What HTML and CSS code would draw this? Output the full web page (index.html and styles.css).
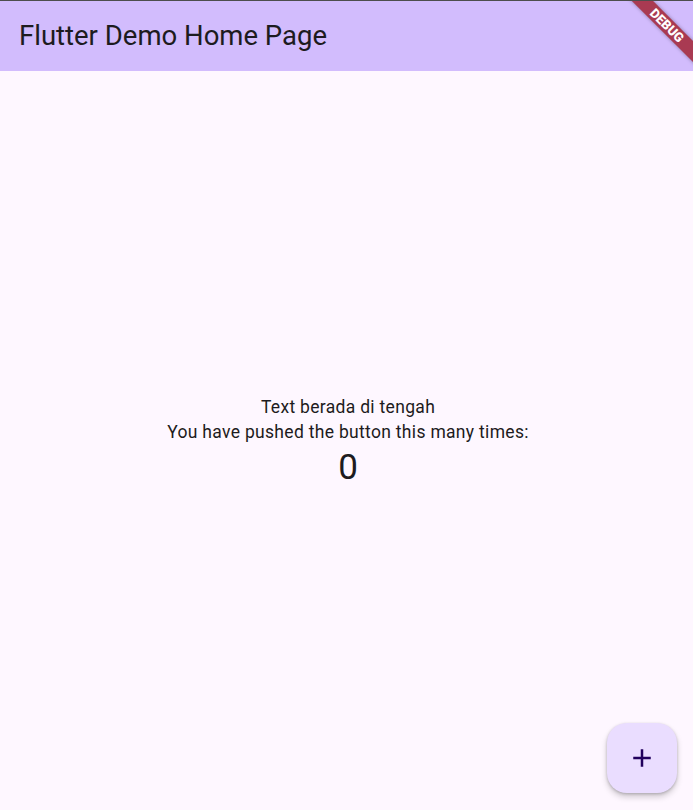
FILE: index.html
```html
<!DOCTYPE html>
<html lang="en">
<head>
<meta charset="utf-8">
<title>Flutter Demo Home Page</title>
<link rel="stylesheet" href="styles.css">
</head>
<body>
<div class="app">
  <header class="appbar">
    <h1 class="title">Flutter Demo Home Page</h1>
  </header>
  <main class="content">
    <p class="line">Text berada di tengah</p>
    <p class="line">You have pushed the button this many times:</p>
    <p class="counter">0</p>
  </main>
  <button class="fab" aria-label="Increment">
    <svg viewBox="0 0 24 24" width="30" height="30"><path d="M19 13h-6v6h-2v-6H5v-2h6V5h2v6h6v2z" fill="#21005D"/></svg>
  </button>
  <div class="banner">DEBUG</div>
</div>
</body>
</html>
```
FILE: styles.css
```css
html, body {
  margin: 0;
  padding: 0;
}
body {
  width: 693px;
  height: 810px;
  overflow: hidden;
  background: #FEF7FF;
  font-family: Roboto, "Liberation Sans", sans-serif;
  color: #1D1B20;
}
.app {
  position: relative;
  width: 693px;
  height: 810px;
  overflow: hidden;
  display: flex;
  flex-direction: column;
  border-top: 1px solid #4d4d4d;
  box-sizing: border-box;
}
.appbar {
  height: 70px;
  flex: none;
  background: #D2BCFD;
  display: flex;
  align-items: center;
  padding-left: 19px;
}
.title {
  margin: 0;
  font-size: 27.5px;
  font-weight: 400;
  line-height: 34px;
  color: #1D1B20;
}
.content {
  flex: 1;
  display: flex;
  flex-direction: column;
  align-items: center;
  justify-content: center;
  padding: 4px 0 0 3px;
}
.line {
  margin: 0;
  font-size: 17.5px;
  line-height: 25px;
  letter-spacing: 0.31px;
}
.counter {
  margin: 0;
  font-size: 35px;
  line-height: 45px;
}
.fab {
  position: absolute;
  left: 607px;
  top: 722px;
  width: 70px;
  height: 70px;
  border: none;
  padding: 0;
  border-radius: 20px;
  background: #EADDFF;
  box-shadow: 0 4px 6px rgba(0,0,0,0.18), 0 1px 3px rgba(0,0,0,0.2);
  display: flex;
  align-items: center;
  justify-content: center;
}
.banner {
  position: absolute;
  left: 617px;
  top: 17px;
  width: 100px;
  height: 15px;
  transform: rotate(45deg);
  background: #A93A52;
  box-shadow: 0 0 4px rgba(0,0,0,0.35);
  color: #fff;
  font-family: Roboto, "Liberation Sans", sans-serif;
  font-weight: 900;
  font-size: 13px;
  line-height: 15px;
  text-align: center;
}
```
